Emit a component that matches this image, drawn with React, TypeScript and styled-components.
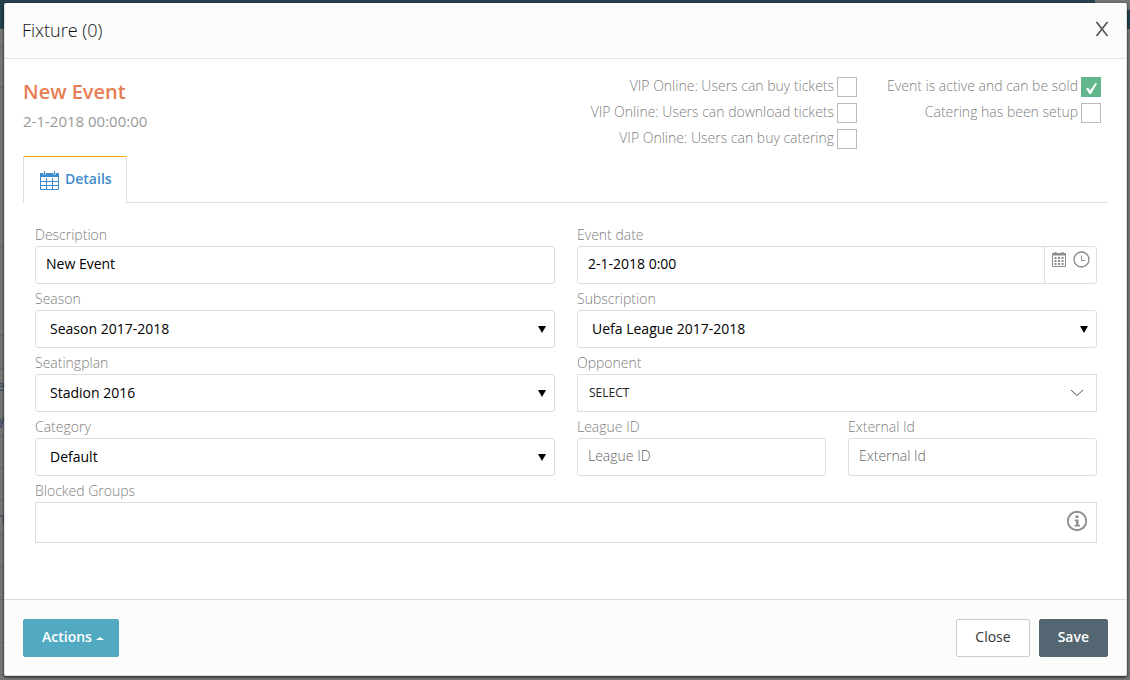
import React, { useState } from "react";
import styled, { createGlobalStyle } from "styled-components";

const GlobalStyle = createGlobalStyle`
  *, *::before, *::after { box-sizing: border-box; }
  body {
    margin: 0;
    background: #777;
    color: #333;
    font-family: "Open Sans", "Liberation Sans", sans-serif;
    font-size: 14px;
    line-height: 20px;
  }
  button, input, select { font: inherit; }
`;

const Screen = styled.div`
  position: relative;
  min-height: 100vh;
  display: flex;
  padding: 3px 3px 4px 4px;
  overflow: hidden;
`;

const Backdrop = styled.div`
  position: absolute;
  inset: 0;
  display: flex;
  flex-direction: column;
  background: #777675;
`;

const BackdropBar = styled.div`
  display: flex;
  justify-content: flex-end;
  height: 29px;
  flex: none;
  background: #27424f;
`;

const BackdropCorner = styled.div`
  width: 35px;
  height: 10px;
  background: #777675;
`;

const BackdropRow = styled.div<{ $height: number }>`
  display: flex;
  flex-direction: column;
  justify-content: space-around;
  height: ${(p) => p.$height}px;
  flex: none;
  border-bottom: 1px solid #686868;
  color: #2f4468;
`;

const BackdropText = styled.span`
  display: flex;
  justify-content: flex-end;
  width: 5px;
`;

const Modal = styled.section`
  position: relative;
  flex: 1;
  min-width: 0;
  display: flex;
  flex-direction: column;
  background: #fff;
  border: 1px solid #e0e0e0;
  border-top-color: #fcfcfc;
  border-radius: 2px;
  box-shadow: 0 1px 3px rgba(0, 0, 0, 0.8);
`;

const ModalHeader = styled.header`
  display: flex;
  align-items: center;
  justify-content: space-between;
  height: 55px;
  padding: 0 17px 2px;
  background: #fcfcfc;
  border-bottom: 1px solid #e2e2e2;
`;

const ModalTitle = styled.h1`
  margin: 0;
  font-size: 18px;
  line-height: 24px;
  font-weight: 300;
  color: #111;
`;

const CloseIcon = styled.button`
  display: flex;
  padding: 0 0 2px;
  border: 0;
  background: none;
  color: #555;
  cursor: pointer;
`;

const ModalBody = styled.div`
  flex: 1;
  padding: 18px;
`;

const Summary = styled.div`
  display: flex;
  justify-content: space-between;
  height: 79px;
`;

const EventName = styled.h2`
  margin: 0;
  padding-top: 3px;
  font-size: 20px;
  line-height: 24px;
  font-weight: 600;
  color: #e67e55;
`;

const EventTime = styled.p`
  margin: 7px 0 0;
  font-size: 15px;
  color: #999;
`;

const Flags = styled.div`
  display: flex;
  gap: 30px;
  padding-right: 7px;
`;

const FlagColumn = styled.div`
  display: flex;
  flex-direction: column;
  align-items: flex-end;
  gap: 6px;
`;

const FlagLabel = styled.label`
  display: flex;
  gap: 3px;
  height: 20px;
  line-height: 18px;
  font-weight: 300;
  color: #808080;
`;

const Tick = styled.input`
  appearance: none;
  width: 20px;
  height: 20px;
  margin: 0;
  border: 1px solid #bbb;
  background: #fff;
  &:checked {
    border-color: #62b68b;
    background: #62b68b;
  }
`;

const TickBox = styled.span`
  position: relative;
  display: flex;
  svg {
    position: absolute;
    inset: 0;
    pointer-events: none;
  }
`;

const Tabs = styled.nav`
  display: flex;
  border-bottom: 1px solid #ddd;
`;

const Tab = styled.a`
  display: flex;
  align-items: center;
  gap: 6px;
  height: 47px;
  margin-bottom: -1px;
  padding: 0 14px 2px 16px;
  border: 1px solid #ddd;
  border-top-color: #ffa500;
  border-bottom: 0;
  background: #fff;
  color: #428bca;
  font-weight: 600;
  text-decoration: none;
  svg { margin-top: 3px; }
`;

const Form = styled.form`
  display: grid;
  grid-template-columns: 1fr 1fr;
  gap: 5px 22px;
  padding: 22px 11px 0 12px;
`;

const Pair = styled.div`
  display: grid;
  grid-template-columns: 1fr 1fr;
  gap: 22px;
`;

const FieldBox = styled.div<{ $wide?: boolean }>`
  min-width: 0;
  grid-column: ${(p) => (p.$wide ? "1 / -1" : "auto")};
`;

const FieldLabel = styled.label`
  display: block;
  height: 21px;
  font-weight: 300;
  color: #808080;
`;

const Control = styled.div<{ $square?: boolean; $tall?: boolean }>`
  position: relative;
  display: flex;
  height: ${(p) => (p.$tall ? 41 : 38)}px;
  border: 1px solid #ddd;
  border-radius: ${(p) => (p.$square ? 0 : 3)}px;
  background: #fff;
`;

const TextInput = styled.input`
  flex: 1;
  min-width: 0;
  padding: 0 10px 2px;
  border: 0;
  outline: 0;
  background: transparent;
  color: #000;
  font-weight: 400;
  &::placeholder { color: #666; opacity: 1; font-weight: 300; }
`;

const SelectInput = styled.select<{ $small?: boolean }>`
  appearance: none;
  flex: 1;
  min-width: 0;
  padding: 0 ${(p) => (p.$small ? 11 : 14)}px;
  border: 0;
  outline: 0;
  background: transparent;
  color: ${(p) => (p.$small ? "#222" : "#000")};
  font-size: ${(p) => (p.$small ? 12 : 14)}px;
  font-weight: 400;
`;

const Arrow = styled.span<{ $right: number }>`
  position: absolute;
  right: ${(p) => p.$right}px;
  top: 0;
  bottom: 0;
  display: flex;
  align-items: center;
  pointer-events: none;
`;

const DateButtons = styled.div`
  display: flex;
  gap: 7px;
  width: 52px;
  padding: 4px 6px 0 7px;
  border-left: 1px solid #ddd;
`;

const IconButton = styled.button`
  display: flex;
  height: 17px;
  padding: 0;
  border: 0;
  background: none;
  color: #8c8c8c;
  cursor: pointer;
`;

const InfoButton = styled(IconButton)`
  height: 22px;
  margin: 7px 8px 0 0;
  color: #8e8e8e;
`;

const ModalFooter = styled.footer`
  display: flex;
  align-items: center;
  gap: 9px;
  height: 76px;
  padding: 0 18px;
  background: #fcfcfc;
  border-top: 1px solid #ddd;
`;

const Button = styled.button<{ $kind: "accent" | "plain" | "dark" }>`
  display: flex;
  align-items: center;
  gap: 4px;
  height: 38px;
  padding: 0 ${(p) => (p.$kind === "accent" ? 14 : 18)}px 2px 18px;
  border: 1px solid
    ${(p) => ({ accent: "#51aac2", plain: "#ccc", dark: "#546672" })[p.$kind]};
  border-radius: 2px;
  background: ${(p) => ({ accent: "#51aac2", plain: "#fff", dark: "#546672" })[p.$kind]};
  color: ${(p) => (p.$kind === "plain" ? "#333" : "#fff")};
  font-weight: ${(p) => (p.$kind === "plain" ? 400 : 600)};
  margin-right: ${(p) => (p.$kind === "accent" ? "auto" : 0)};
  cursor: pointer;
  svg { margin-top: 4px; }
`;

const TabCalendar = () => (
  <svg width="19" height="19" viewBox="0 0 19 19" fill="none" stroke="currentColor" aria-hidden="true">
    <path d="M0 2h19v4H0z" fill="currentColor" stroke="none" />
    <path d="M4.500 0v4M14.500 0v4" stroke="#fff" strokeWidth="2" />
    <path d="M4.500 0v4M14.500 0v4M.5 6v12.500h18V6M0 10.500h19M0 14.500h19M6.500 7v11M12.500 7v11" />
  </svg>
);

const SmallCalendar = () => (
  <svg width="14" height="17" viewBox="0 0 14 17" fill="none" stroke="currentColor" aria-hidden="true">
    <path d="M.5 2.500h13v13H.5z" />
    <path d="M1 3.500h12M3.500 1v2M10.500 1v2" strokeWidth="2" />
    <path d="M2.500 7h9M2.500 10h9M2.500 13h9" strokeWidth="2" strokeDasharray="2 1.500" />
  </svg>
);

const Clock = () => (
  <svg width="17" height="17" viewBox="0 0 17 17" fill="none" stroke="currentColor" aria-hidden="true">
    <circle cx="8.500" cy="8.500" r="7.500" strokeWidth="1.300" />
    <path d="M8.500 4.500V9.500H12" />
  </svg>
);

const Info = () => (
  <svg width="22" height="22" viewBox="0 0 22 22" fill="none" stroke="currentColor" aria-hidden="true">
    <circle cx="11" cy="11" r="9.200" strokeWidth="1.900" />
    <path d="M9.500 5.500h3v2.500h-3zM8.500 9.500h4v5.500h1.500v1.500H8.500V15H10v-4H8.500z" fill="currentColor" stroke="none" />
  </svg>
);

const Triangle = () => (
  <svg width="8" height="8" viewBox="0 0 8 8" aria-hidden="true">
    <path d="M0 1h8L4 8z" fill="#000" />
  </svg>
);

const Chevron = () => (
  <svg width="14" height="8" viewBox="0 0 14 8" fill="none" stroke="#555" aria-hidden="true">
    <path d="M1 1l6 5.500L13 1" />
  </svg>
);

function Flag({ label, initial = false }: { label: string; initial?: boolean }) {
  const [on, setOn] = useState(initial);
  return (
    <FlagLabel>
      {label}
      <TickBox>
        <Tick type="checkbox" checked={on} onChange={() => setOn(!on)} />
        {on && (
          <svg width="20" height="20" viewBox="0 0 20 20" aria-hidden="true">
            <path d="M5 11.500l2-1 2 3L14.500 6l1.500.5L10 17H8.500z" fill="#fff" />
          </svg>
        )}
      </TickBox>
    </FlagLabel>
  );
}

function TextField(props: { id: string; label: string; value?: string; placeholder?: string; children?: React.ReactNode }) {
  return (
    <FieldBox>
      <FieldLabel htmlFor={props.id}>{props.label}</FieldLabel>
      <Control>
        <TextInput id={props.id} defaultValue={props.value} placeholder={props.placeholder} />
        {props.children}
      </Control>
    </FieldBox>
  );
}

function SelectField({ id, label, value, thin = false }: { id: string; label: string; value: string; thin?: boolean }) {
  return (
    <FieldBox>
      <FieldLabel htmlFor={id}>{label}</FieldLabel>
      <Control $square={thin}>
        <SelectInput id={id} $small={thin}>
          <option>{value}</option>
        </SelectInput>
        <Arrow $right={thin ? 12 : 8}>{thin ? <Chevron /> : <Triangle />}</Arrow>
      </Control>
    </FieldBox>
  );
}

const backdropRows: { height: number; texts?: string[] }[] = [
  { height: 18 },
  { height: 41 },
  { height: 159 },
  { height: 89 },
  { height: 33 },
  { height: 67, texts: ["e", "y"] },
  { height: 32 },
  { height: 33 },
  { height: 34, texts: ["n"] },
  { height: 32 },
  { height: 33 },
  { height: 43 },
  { height: 32 },
];

export default function App() {
  return (
    <>
      <GlobalStyle />
      <Screen>
        <Backdrop aria-hidden="true">
          <BackdropBar>
            <BackdropCorner />
          </BackdropBar>
          {backdropRows.map((row, i) => (
            <BackdropRow key={i} $height={row.height}>
              {row.texts?.map((text) => <BackdropText key={text}>{text}</BackdropText>)}
            </BackdropRow>
          ))}
        </Backdrop>
        <Modal role="dialog" aria-labelledby="modal-title">
          <ModalHeader>
            <ModalTitle id="modal-title">Fixture (0)</ModalTitle>
            <CloseIcon type="button" aria-label="Close dialog">
              <svg width="14" height="16" viewBox="0 0 14 16" fill="none" stroke="currentColor" strokeWidth="1.700" aria-hidden="true">
                <path d="M1.500 1l11 14M12.500 1l-11 14" />
              </svg>
            </CloseIcon>
          </ModalHeader>
          <ModalBody>
            <Summary>
              <div>
                <EventName>New Event</EventName>
                <EventTime>2-1-2018 00:00:00</EventTime>
              </div>
              <Flags>
                <FlagColumn>
                  <Flag label="VIP Online: Users can buy tickets" />
                  <Flag label="VIP Online: Users can download tickets" />
                  <Flag label="VIP Online: Users can buy catering" />
                </FlagColumn>
                <FlagColumn>
                  <Flag label="Event is active and can be sold" initial />
                  <Flag label="Catering has been setup" />
                </FlagColumn>
              </Flags>
            </Summary>
            <Tabs>
              <Tab href="#details">
                <TabCalendar />
                Details
              </Tab>
            </Tabs>
            <Form id="details">
              <TextField id="description" label="Description" value="New Event" />
              <TextField id="event-date" label="Event date" value="2-1-2018 0:00">
                <DateButtons>
                  <IconButton type="button" aria-label="Pick a date"><SmallCalendar /></IconButton>
                  <IconButton type="button" aria-label="Pick a time"><Clock /></IconButton>
                </DateButtons>
              </TextField>
              <SelectField id="season" label="Season" value="Season 2017-2018" />
              <SelectField id="subscription" label="Subscription" value="Uefa League 2017-2018" />
              <SelectField id="seatingplan" label="Seatingplan" value="Stadion 2016" />
              <SelectField id="opponent" label="Opponent" value="SELECT" thin />
              <SelectField id="category" label="Category" value="Default" />
              <Pair>
                <TextField id="league-id" label="League ID" placeholder="League ID" />
                <TextField id="external-id" label="External Id" placeholder="External Id" />
              </Pair>
              <FieldBox $wide>
                <FieldLabel htmlFor="blocked-groups">Blocked Groups</FieldLabel>
                <Control $square $tall>
                  <TextInput id="blocked-groups" />
                  <InfoButton type="button" aria-label="About blocked groups"><Info /></InfoButton>
                </Control>
              </FieldBox>
            </Form>
          </ModalBody>
          <ModalFooter>
            <Button type="button" $kind="accent">
              Actions
              <svg width="8" height="3" viewBox="0 0 8 3" aria-hidden="true"><path d="M0 3l4-3 4 3z" fill="#fff" /></svg>
            </Button>
            <Button type="button" $kind="plain">Close</Button>
            <Button type="submit" form="details" $kind="dark">Save</Button>
          </ModalFooter>
        </Modal>
      </Screen>
    </>
  );
}
